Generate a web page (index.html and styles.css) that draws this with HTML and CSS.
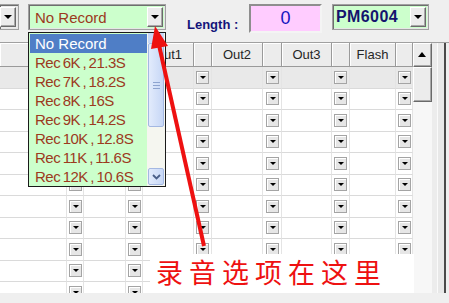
FILE: index.html
```html
<!DOCTYPE html>
<html lang="zh-CN">
<head>
  <meta charset="UTF-8">
  <meta name="viewport" content="width=device-width, initial-scale=1.0">
  <title>Record Setting</title>
  <link rel="stylesheet" href="styles.css">
</head>
<body>
  <div class="toolbar">
    <div class="combo cut"><span class="drop"></span></div>
    <div class="combo rec">
      <span class="value">No Record</span>
      <span class="drop"></span>
    </div>
    <span class="len-label">Length :</span>
    <div class="len-box">0</div>
    <div class="combo model">
      <span class="value">PM6004</span>
      <span class="drop"></span>
    </div>
  </div>

  <div class="grid-wrap">
    <div class="grid" id="grid">
      <div class="hd"></div>
      <div class="hd"></div>
      <div class="hd"></div>
      <div class="hd"></div>
      <div class="hd">Out1</div>
      <div class="hd"></div>
      <div class="hd">Out2</div>
      <div class="hd"></div>
      <div class="hd">Out3</div>
      <div class="hd"></div>
      <div class="hd">Flash</div>
      <div class="hd"></div>
      <!-- Rows populated via JavaScript -->
    </div>
    <div class="vscroll">
      <div class="sb-btn up"></div>
      <div class="sb-thumb"></div>
      <div class="sb-track"></div>
    </div>
    <div class="side"></div>
  </div>

  <!-- Open dropdown of the record combo -->
  <div class="rec-menu">
    <ul class="rec-list">
      <li class="selected">No Record</li>
      <li>Rec 6K , 21.3S</li>
      <li>Rec 7K , 18.2S</li>
      <li>Rec 8K , 16S</li>
      <li>Rec 9K , 14.2S</li>
      <li>Rec 10K , 12.8S</li>
      <li>Rec 11K , 11.6S</li>
      <li>Rec 12K , 10.6S</li>
    </ul>
    <div class="lscroll">
      <div class="ls-up"></div>
      <div class="ls-thumb"><span class="grip"></span></div>
      <div class="ls-track"></div>
      <div class="ls-down">
        <svg width="9" height="6" viewBox="0 0 9 6"><polyline points="1,1 4.5,4.5 8,1" fill="none" stroke="#4a5f88" stroke-width="1.8"/></svg>
      </div>
    </div>
  </div>

  <!-- Annotation -->
  <svg class="arrow" width="449" height="303" viewBox="0 0 449 303">
    <line x1="204" y1="246" x2="159" y2="45" stroke="#ee1111" stroke-width="4"/>
    <polygon points="155,26 168,46 151,49" fill="#ee1111"/>
  </svg>
  <div class="note">录音选项在这里</div>

  <script>
    const columns = ['', 'btn', '', 'btn', '', 'btn', '', 'btn', '', 'btn', '', 'btn'];
    const grid = document.getElementById('grid');

    for (let r = 0; r < 11; r++) {
      columns.forEach(type => {
        const cell = document.createElement('div');
        cell.className = 'cell' + (r === 0 ? ' first' : '');
        if (type === 'btn') {
          cell.innerHTML = '<span class="cell-drop"></span>';
        }
        grid.appendChild(cell);
      });
    }
  </script>
</body>
</html>
```

FILE: styles.css
```css
/* Base */
* {
  margin: 0;
  padding: 0;
  box-sizing: border-box;
}

body {
  font-family: "Liberation Sans", Arial, sans-serif;
  background: #efefef;
  width: 449px;
  height: 303px;
  overflow: hidden;
  position: relative;
}

/* Top bar */
.toolbar {
  display: flex;
  align-items: flex-start;
  height: 42px;
  padding-top: 4px;
}

.combo {
  display: flex;
  align-items: center;
  height: 26px;
  background: #ccffcc;
  border: 1px solid #a0a0a0;
  box-shadow: inset 1px 1px 0 #6e6e6e, inset -1px -1px 0 #e6e6e6;
  padding: 2px 2px 2px 1px;
}

.combo .value {
  flex: 1;
  padding-left: 5px;
  white-space: nowrap;
}

.combo .drop {
  position: relative;
  width: 16px;
  height: 20px;
  background: #ececec;
  border: 1px solid;
  border-color: #ffffff #6a6a6a #6a6a6a #ffffff;
  box-shadow: inset -1px -1px 0 #a8a8a8;
}

.combo .drop::after {
  content: "";
  position: absolute;
  left: 3px;
  top: 7px;
  border-left: 4px solid transparent;
  border-right: 4px solid transparent;
  border-top: 4px solid #000;
}

.combo.cut {
  width: 19px;
  border-left: none;
  padding-left: 0;
  background: #ececec;
}

.combo.rec {
  width: 138px;
  margin-left: 9px;
  color: #9c3a1e;
  font-size: 15px;
}

.combo.model {
  width: 97px;
  margin-left: 10px;
  color: #14146e;
  font-size: 16px;
  font-weight: bold;
  letter-spacing: 0.4px;
}

.combo.model .value {
  padding-left: 2px;
}

.len-label {
  margin-left: 21px;
  width: 49px;
  margin-top: 13px;
  font-size: 13px;
  font-weight: bold;
  color: #14147a;
  white-space: nowrap;
}

.len-box {
  margin-left: 13px;
  width: 73px;
  height: 29px;
  background: #ffccff;
  border: 2px solid;
  border-color: #8e8e8e #f4f4f4 #f4f4f4 #8e8e8e;
  color: #1414c0;
  font-size: 18px;
  line-height: 25px;
  text-align: center;
}

/* Grid */
.grid-wrap {
  display: flex;
  height: 251px;
  border-top: 1px solid #a0a0a0;
}

.grid {
  width: 413px;
  overflow: hidden;
  background: #ffffff;
  display: grid;
  grid-template-columns: 67px 17px 42px 17px 51px 18px 51px 19px 50px 18px 46px 17px;
  grid-template-rows: 24px;
  grid-auto-rows: 21.5px;
}

.hd {
  background: #ececec;
  border-right: 1px solid #9a9a9a;
  border-bottom: 1px solid #9a9a9a;
  box-shadow: inset 1px 1px 0 #ffffff;
  font-size: 13px;
  color: #262626;
  line-height: 23px;
  text-align: center;
}

.cell {
  display: flex;
  align-items: center;
  justify-content: center;
  border-right: 1px solid #e4e4e4;
  border-bottom: 1px solid #dadada;
}

.cell.first {
  background: #e9e9e9;
}

.cell-drop {
  position: relative;
  width: 13px;
  height: 13px;
  background: #e6e6e6;
  border: 1px solid #a4a4a4;
  box-shadow: inset 1px 1px 0 #ffffff;
}

.cell-drop::after {
  content: "";
  position: absolute;
  left: 3px;
  top: 4px;
  border-left: 3px solid transparent;
  border-right: 3px solid transparent;
  border-top: 3px solid #000;
}

/* Grid scrollbar */
.vscroll {
  width: 19px;
  display: flex;
  flex-direction: column;
  background: #f7f7f7;
}

.sb-btn,
.sb-thumb {
  background: #ececec;
  border: 1px solid;
  border-color: #ffffff #6a6a6a #6a6a6a #ffffff;
  box-shadow: inset -1px -1px 0 #a8a8a8;
}

.sb-btn.up {
  position: relative;
  height: 24px;
}

.sb-btn.up::after {
  content: "";
  position: absolute;
  left: 4px;
  top: 8px;
  border-left: 4px solid transparent;
  border-right: 4px solid transparent;
  border-bottom: 5px solid #000;
}

.sb-thumb {
  height: 35px;
}

.sb-track {
  flex: 1;
}

.side {
  width: 14px;
  background: linear-gradient(to right, #ececec 5px, #fafafa 5px, #fafafa 6px, #e8e8e8 6px);
  border-right: 2px solid #4a4a4a;
}

/* Dropdown list */
.rec-menu {
  position: absolute;
  left: 28px;
  top: 32px;
  width: 138px;
  height: 155px;
  display: flex;
  background: #ccffcc;
  border: 1px solid #1a1a1a;
}

.rec-list {
  list-style: none;
  flex: 1;
  padding: 1px 0 0 1px;
}

.rec-list li {
  height: 19px;
  line-height: 19px;
  padding-left: 5px;
  font-size: 15px;
  color: #9c3a1e;
  letter-spacing: -0.5px;
  word-spacing: -1.2px;
  white-space: nowrap;
}

.rec-list li.selected {
  background: #4f7ec6;
  color: #ffffff;
  letter-spacing: 0;
  word-spacing: 0;
}

.lscroll {
  width: 18px;
  display: flex;
  flex-direction: column;
  background: #f5f6f0;
  padding: 0 1px;
}

.ls-up {
  height: 10px;
  background: #c8d8f6;
}

.ls-thumb,
.ls-down {
  display: flex;
  align-items: center;
  justify-content: center;
  background: linear-gradient(to right, #e2ebfc, #c7d7f6);
  border: 1px solid #a4b8e2;
  border-radius: 2px;
}

.ls-thumb {
  height: 84px;
}

.grip {
  width: 7px;
  height: 7px;
  border-top: 1px solid #8ea4d0;
  border-bottom: 1px solid #8ea4d0;
  background: linear-gradient(#8ea4d0, #8ea4d0) center / 7px 1px no-repeat;
}

.ls-track {
  flex: 1;
}

.ls-down {
  height: 17px;
  margin-bottom: 1px;
}

/* Annotation */
.arrow {
  position: absolute;
  left: 0;
  top: 0;
  pointer-events: none;
}

.note {
  position: absolute;
  left: 150px;
  top: 254px;
  width: 264px;
  height: 39px;
  padding: 1px 0 0 6px;
  background: #ffffff;
  color: #ee1111;
  font-family: "Noto Sans CJK SC", sans-serif;
  font-size: 27px;
  line-height: 34px;
  letter-spacing: 6px;
}
```
